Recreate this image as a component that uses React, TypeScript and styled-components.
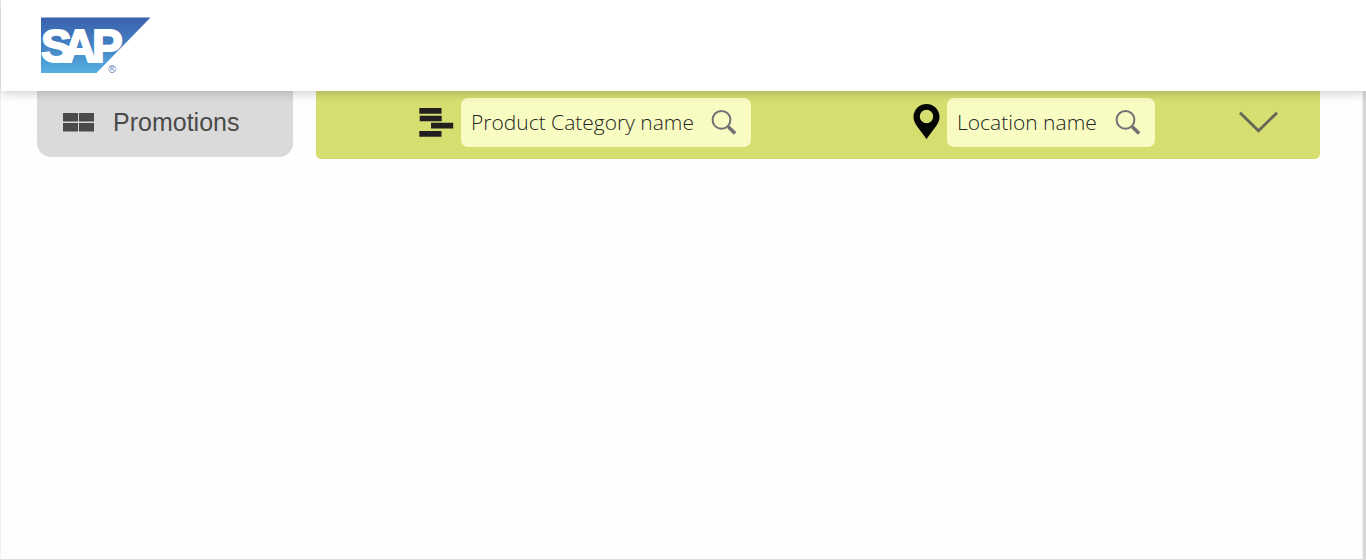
import React from "react";
import styled, { createGlobalStyle } from "styled-components";

const GlobalStyle = createGlobalStyle`
  *, *::before, *::after { box-sizing: border-box; }
  body { margin: 0; background: #fefefe; font-family: "Open Sans", sans-serif; }
`;

const Page = styled.div`
  display: flex;
  flex-direction: column;
  min-height: 100vh;
  border-left: 1px solid #f0f0f0;
  border-bottom: 1px solid #dedede;
`;

const Header = styled.header`
  position: relative;
  z-index: 1;
  display: flex;
  height: 91px;
  padding: 17px 40px;
  background: #fff;
  box-shadow: 0 2px 10px rgba(0, 0, 0, 0.2);
`;

const LogoLink = styled.a`
  display: block;
  height: 57px;
  svg { display: block; }
`;

const Content = styled.main`
  flex: 1;
  display: flex;
  align-items: flex-start;
  gap: 23px;
  padding: 0 43px 0 36px;
  border-right: 3px solid #d8d8d8;
  box-shadow: inset -1px 0 0 #ededed;
`;

const Tab = styled.button`
  flex: none;
  display: flex;
  align-items: center;
  gap: 19px;
  width: 256px;
  height: 66px;
  padding: 0 26px 4px;
  border: 0;
  border-radius: 0 0 14px 14px;
  background: #dadada;
  color: #4a4a4a;
  font: 25px "Liberation Sans", Arial, sans-serif;
`;

const FilterBar = styled.form`
  flex: 1;
  display: flex;
  align-items: center;
  height: 68px;
  padding: 0 42px 5px 103px;
  border-radius: 0 0 5px 5px;
  background: #d5de6f;
`;

const Filter = styled.label<{ $end?: boolean }>`
  display: flex;
  align-items: center;
  gap: 7px;
  margin-left: ${(p) => (p.$end ? "auto" : "0")};
  margin-right: ${(p) => (p.$end ? "84px" : "0")};
`;

const SearchBox = styled.span<{ $width: number }>`
  display: flex;
  align-items: center;
  width: ${(p) => p.$width}px;
  height: 49px;
  padding: 0 14px 0 10px;
  border-radius: 7px;
  background: #f8fcc3;
`;

const SearchInput = styled.input`
  flex: 1;
  min-width: 0;
  padding: 0 0 2px;
  border: 0;
  outline: 0;
  background: transparent;
  color: #25261c;
  font: 300 21px "Open Sans", sans-serif;
  &::placeholder { color: #25261c; opacity: 1; }
`;

const IconButton = styled.button`
  flex: none;
  display: block;
  padding: 0;
  border: 0;
  background: transparent;
  svg { display: block; }
`;

const SapLogo = () => (
  <svg width="110" height="57" viewBox="0 0 110 57" role="img" aria-label="SAP">
    <defs>
      <linearGradient id="sap" x1="0" y1="0" x2="0" y2="1">
        <stop offset="0" stopColor="#3b62ac" />
        <stop offset="0.5" stopColor="#4381c4" />
        <stop offset="1" stopColor="#55b0e2" />
      </linearGradient>
    </defs>
    <path d="M0 0.5H109.5L55.5 56H0Z" fill="url(#sap)" />
    <text
      x="0 22 51"
      y="44.500"
      fill="#fff"
      stroke="#fff"
      strokeWidth="2"
      fontFamily="Liberation Sans, Arial, sans-serif"
      fontWeight="700"
      fontSize="46"
    >
      SAP
    </text>
    <text x="67" y="56" fill="#6680b8" fontFamily="Liberation Sans, Arial, sans-serif" fontSize="11">®</text>
  </svg>
);

const TilesIcon = () => (
  <svg width="31" height="20" viewBox="0 -1 31 20" fill="#4a4a4a" aria-hidden="true">
    <path d="M0 0h15v8.500H0zM16 0h15v8.500H16zM0 10h15v8.500H0zM16 10h15v8.500H16z" />
  </svg>
);

const CategoryIcon = () => (
  <svg width="35" height="31" viewBox="0 0 35 31" fill="#231f20" aria-hidden="true">
    <path d="M.3 1h22.200v5.800H.3zM.7 8.700h22v5.500H.7zM12 15.800h22.200v5.800H12zM.3 24h22.200v5.800H.3z" />
  </svg>
);

const PinIcon = () => (
  <svg width="27" height="37" viewBox="0 0 27 37" fill="#030806" aria-hidden="true">
    <path
      fillRule="evenodd"
      d="M13.500 0C6 0 .5 5.800.5 13c0 3.500 1.400 6.200 3.500 9.200L13.500 35 23 22.200c2.100-3 3.500-5.700 3.500-9.200C26.500 5.800 21 0 13.500 0Zm0 5.800a6.700 6.700 0 1 1 0 13.400 6.700 6.700 0 0 1 0-13.400Z"
    />
  </svg>
);

const SearchIcon = () => (
  <svg width="26" height="27" viewBox="0 0 26 27" fill="none" stroke="#707174" aria-hidden="true">
    <circle cx="10.500" cy="10.800" r="8.900" strokeWidth="2" />
    <path d="M16.500 17l2 2" strokeWidth="2" />
    <path d="M17.500 18l6.600 6.500" strokeWidth="3.600" />
  </svg>
);

const ChevronIcon = () => (
  <svg width="39" height="23" viewBox="0 0 39 23" fill="none" stroke="#64665a" strokeWidth="2.800" aria-hidden="true">
    <path d="M1 1.700L19.500 19.800 38 1.700" />
  </svg>
);

interface SearchProps {
  name: string;
  width: number;
}

const Search = ({ name, width }: SearchProps) => (
  <SearchBox $width={width}>
    <SearchInput type="text" aria-label={name} placeholder={name} />
    <IconButton type="button" aria-label={"Search " + name}>
      <SearchIcon />
    </IconButton>
  </SearchBox>
);

export default function App() {
  return (
    <>
      <GlobalStyle />
      <Page>
        <Header>
          <LogoLink href="#" aria-label="SAP home">
            <SapLogo />
          </LogoLink>
        </Header>
        <Content>
          <Tab type="button">
            <TilesIcon />
            Promotions
          </Tab>
          <FilterBar>
            <Filter>
              <CategoryIcon />
              <Search name="Product Category name" width={290} />
            </Filter>
            <Filter $end>
              <PinIcon />
              <Search name="Location name" width={208} />
            </Filter>
            <IconButton type="button" aria-label="Show more filters">
              <ChevronIcon />
            </IconButton>
          </FilterBar>
        </Content>
      </Page>
    </>
  );
}
